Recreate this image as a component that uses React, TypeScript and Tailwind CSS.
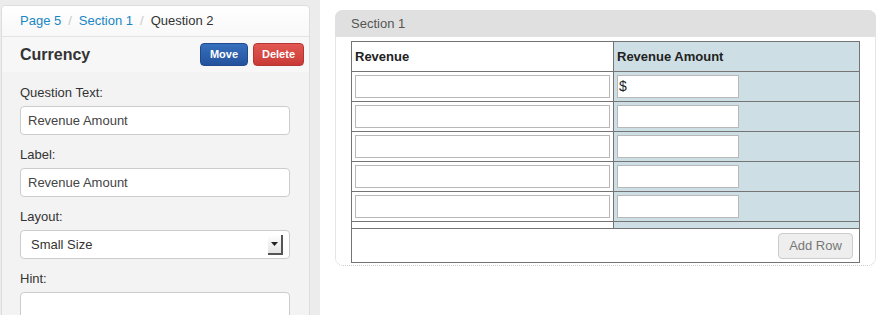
import React from "react";

const rows: string[] = ["$", "", "", "", ""];

const Field: React.FC<{ label: string; value?: string }> = ({ label, value }) => {
    return (
        <div className="mb-[10px]">
            <div className="h-[20px] mb-[3px] text-[13px] leading-[20px] text-[#333]">{label}</div>
            <div className="h-[29px] w-[270px] rounded-[4px] border border-[#cccccc] bg-white pl-[7px] text-[13px] leading-[27px] text-[#444]">
                {value}
            </div>
        </div>
    );
};

const App: React.FC = () => {
    return (
        <div className="flex h-[315px] w-[882px] overflow-hidden bg-white font-['Liberation_Sans',Arial,sans-serif]">
            {/* left editor panel */}
            <div className="w-[320px] shrink-0 bg-[#ececec] pl-[1px] pt-[5px]">
                <div className="h-full w-[309px] overflow-hidden rounded-t-[5px] border border-b-0 border-[#dddddd] bg-[#f3f3f3]">
                    <div className="flex h-[31px] items-center border-b border-[#e3e3e3] bg-gradient-to-b from-white to-[#f8f8f8] pl-[18px] text-[13px]">
                        <span className="text-[#1a86c4]">Page 5</span>
                        <span className="px-[7px] text-[#c8c8c8]">/</span>
                        <span className="text-[#1a86c4]">Section 1</span>
                        <span className="px-[7px] text-[#c8c8c8]">/</span>
                        <span className="text-[#333]">Question 2</span>
                    </div>
                    <div className="flex h-[35px] items-center justify-between bg-[#f7f7f7] pl-[18px] pr-[5px]">
                        <span className="text-[16px] font-bold text-[#333]">Currency</span>
                        <div className="flex gap-[5px]">
                            <button className="h-[23px] w-[48px] rounded-[4px] border border-[#1f4b8e] bg-gradient-to-b from-[#3670bd] to-[#24529c] text-[11px] font-bold text-white">
                                Move
                            </button>
                            <button className="h-[23px] w-[51px] rounded-[4px] border border-[#b33632] bg-gradient-to-b from-[#e25752] to-[#c93a36] text-[11px] font-bold text-white">
                                Delete
                            </button>
                        </div>
                    </div>
                    <div className="pl-[18px] pt-[11px]">
                        <Field label="Question Text:" value="Revenue Amount" />
                        <Field label="Label:" value="Revenue Amount" />
                        <div className="mb-[10px]">
                            <div className="mb-[3px] h-[20px] text-[13px] leading-[20px] text-[#333]">Layout:</div>
                            <div className="flex h-[29px] w-[270px] items-center justify-between rounded-[4px] border border-[#cccccc] bg-white pl-[10px] pr-[6px] text-[13px] text-[#333]">
                                <span>Small Size</span>
                                <div className="flex h-[20px] w-[15px] items-center justify-center border-b-2 border-r-2 border-[#555] bg-gradient-to-b from-white to-[#e4e4e4]">
                                    <svg width="7" height="4" viewBox="0 0 7 4">
                                        <path d="M0 0h7L3.5 4z" fill="#222" />
                                    </svg>
                                </div>
                            </div>
                        </div>
                        <Field label="Hint:" />
                    </div>
                </div>
            </div>

            {/* preview */}
            <div className="pl-[15px] pt-[10px]">
                <div className="h-[256px] w-[541px] rounded-[8px] border border-dotted border-[#cccccc]">
                    <div className="-mx-px -mt-px h-[27px] rounded-t-[8px] bg-[#e0e0e0] pl-[16px] text-[13px] leading-[27px] text-[#555]">
                        Section 1
                    </div>
                    <div className="ml-[15px] mt-[4px] w-[509px] border border-[#747474] text-[13px]">
                        <div className="flex h-[30px] border-b border-[#747474] font-bold text-[#222]">
                            <div className="w-[262px] border-r border-[#747474] bg-white pl-[3px] leading-[29px]">Revenue</div>
                            <div className="flex-1 bg-[#cddfe4] pl-[3px] leading-[29px]">Revenue Amount</div>
                        </div>
                        {rows.map((v, i) => (
                            <div key={i} className="flex h-[30px] border-b border-[#747474]">
                                <div className="flex w-[262px] items-center border-r border-[#747474] bg-white px-[3px]">
                                    <div className="h-[23px] w-[255px] border border-[#b8b8b8] bg-white" />
                                </div>
                                <div className="flex flex-1 items-center bg-[#cddfe4] px-[3px]">
                                    <div className="h-[23px] w-[122px] border border-[#b8b8b8] bg-white pl-[1px] text-[14px] leading-[21px] text-[#222]">
                                        {v}
                                    </div>
                                </div>
                            </div>
                        ))}
                        <div className="flex h-[7px] border-b border-[#747474]">
                            <div className="w-[262px] border-r border-[#747474] bg-white" />
                            <div className="flex-1 bg-[#cddfe4]" />
                        </div>
                        <div className="flex h-[33px] items-center justify-end pr-[6px]">
                            <button className="h-[26px] w-[75px] rounded-[4px] border border-[#cccccc] bg-[#eeeeee] text-[13px] text-[#777]">
                                Add Row
                            </button>
                        </div>
                    </div>
                </div>
            </div>
        </div>
    );
};

export default App;
